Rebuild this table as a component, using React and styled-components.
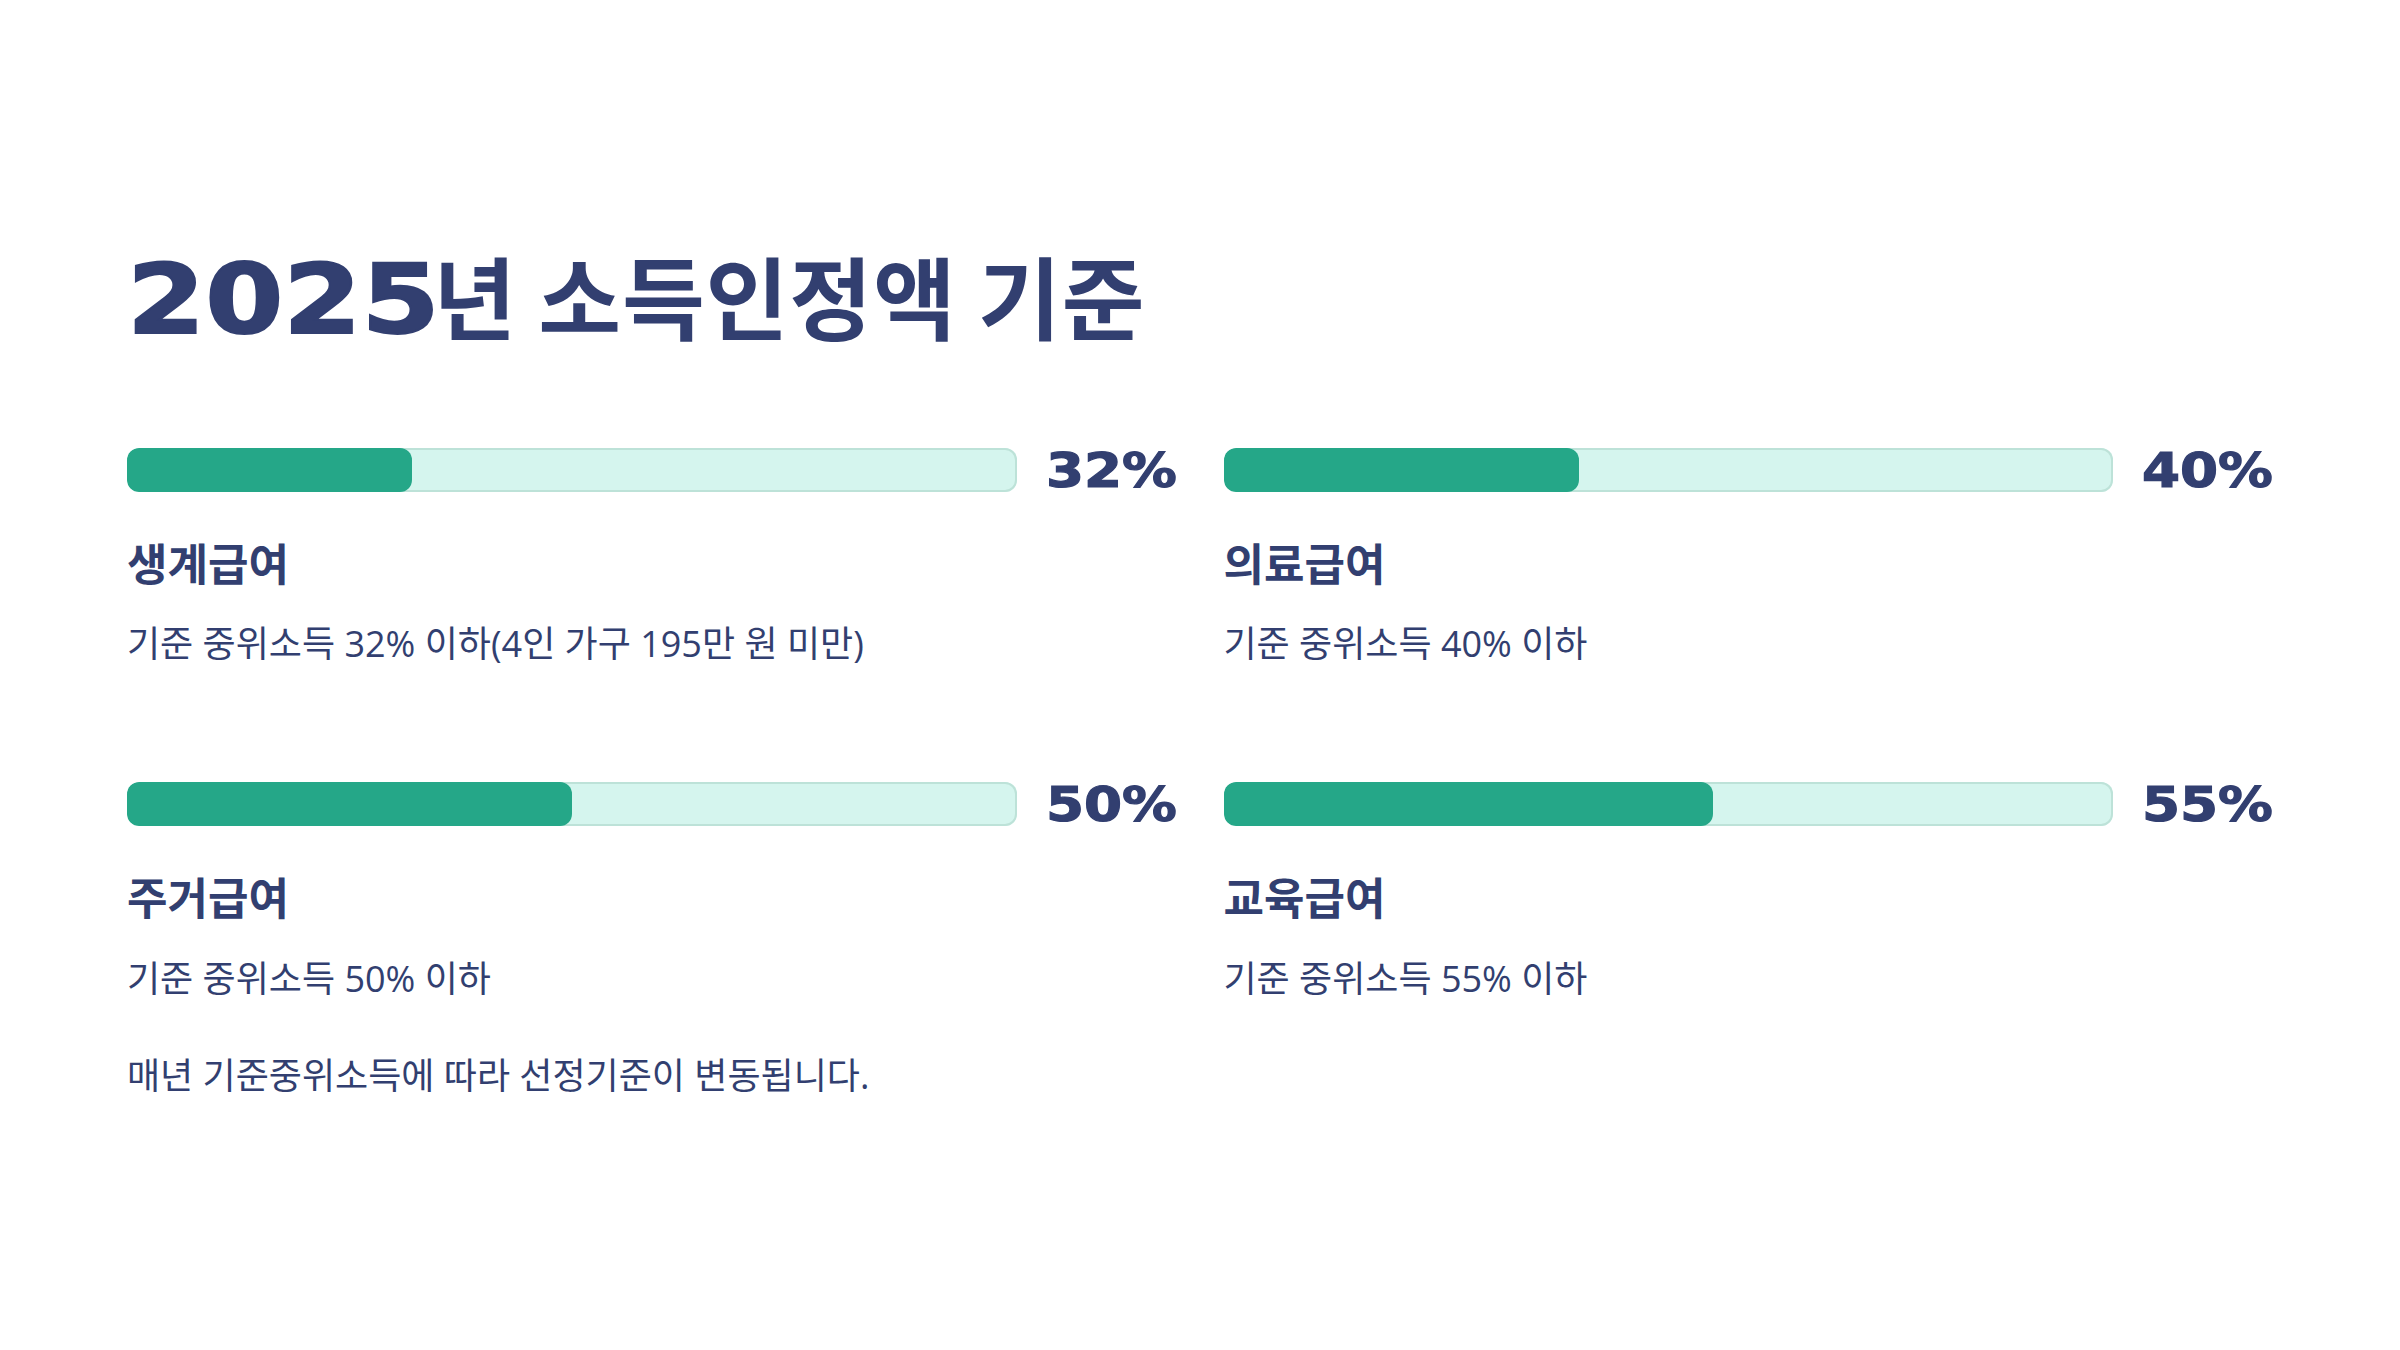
import React from 'react';
import styled, { createGlobalStyle } from 'styled-components';

const NAVY = '#323f70';
const GREEN = '#25a788';
const TRACK = '#d5f5ee';
const TRACK_EDGE = '#bde2d8';

const GlobalStyle = createGlobalStyle`
  html, body {
    margin: 0;
    padding: 0;
    background: #ffffff;
  }
  body {
    font-family: "Open Sans", "Noto Sans CJK KR", sans-serif;
    color: ${NAVY};
  }
`;

const Page = styled.main`
  width: 2400px;
  height: 1350px;
  box-sizing: border-box;
  padding: 240px 127px 0;
  background: #ffffff;
  overflow: hidden;
`;

const Title = styled.h1`
  margin: 0;
  font-family: "Noto Sans CJK KR", sans-serif;
  font-size: 90px;
  font-weight: 700;
  line-height: 1.2;
  letter-spacing: 0.01em;
  color: ${NAVY};
`;

// wide geometric numerals: DejaVu Bold stretched sideways
const Wide = styled.span`
  display: inline-block;
  font-family: "DejaVu Sans", sans-serif;
  font-weight: 700;
  font-size: ${(p) => p.$size}px;
  letter-spacing: 0;
  -webkit-text-stroke: ${(p) => p.$stroke || 0}px ${NAVY};
  transform: scaleX(${(p) => p.$scale});
  transform-origin: ${(p) => p.$origin || 'left'};
  margin-right: ${(p) => p.$extra || 0}px;
`;

const Grid = styled.section`
  display: grid;
  grid-template-columns: 1fr 1fr;
  column-gap: 47px;
  row-gap: 111px;
  margin-top: 90px;
`;

const Item = styled.article`
  display: flex;
  flex-direction: column;
`;

const BarRow = styled.div`
  display: flex;
  align-items: center;
  gap: 45px;
  height: 44px;
`;

const Track = styled.div`
  flex: 1;
  height: 44px;
  border-radius: 12px;
  background: ${TRACK};
  box-shadow: inset 0 0 0 2px ${TRACK_EDGE};
  overflow: hidden;
`;

const Fill = styled.div`
  height: 100%;
  border-radius: 12px;
  background: ${GREEN};
`;

const Percent = styled.div`
  line-height: 1;
  color: ${NAVY};
`;

const Heading = styled.h2`
  margin: 42px 0 0;
  font-family: "Noto Sans CJK KR", sans-serif;
  font-size: 44px;
  font-weight: 700;
  line-height: 1.3;
  color: ${NAVY};
`;

const Desc = styled.p`
  margin: 26px 0 0;
  font-size: 36px;
  font-weight: 400;
  line-height: 1.5;
  color: ${NAVY};
`;

const Note = styled.p`
  margin: 43px 0 0;
  font-size: 36px;
  font-weight: 400;
  line-height: 1.5;
  color: ${NAVY};
`;

const items = [
  { value: 32, name: '생계급여', text: '기준 중위소득 32% 이하(4인 가구 195만 원 미만)' },
  { value: 40, name: '의료급여', text: '기준 중위소득 40% 이하' },
  { value: 50, name: '주거급여', text: '기준 중위소득 50% 이하' },
  { value: 55, name: '교육급여', text: '기준 중위소득 55% 이하' },
];

export default function App() {
  return (
    <>
      <GlobalStyle />
      <Page>
        <Title>
          <Wide $size={96} $scale={1.17} $extra={39} $stroke={2}>2025</Wide>년 소득인정액 기준
        </Title>
        <Grid>
          {items.map((item) => (
            <Item key={item.name}>
              <BarRow>
                <Track>
                  <Fill style={{ width: `${item.value}%` }} />
                </Track>
                <Percent>
                  <Wide $size={48} $scale={1.14} $origin="right" $stroke={1.2}>
                    {item.value}%
                  </Wide>
                </Percent>
              </BarRow>
              <Heading>{item.name}</Heading>
              <Desc>{item.text}</Desc>
            </Item>
          ))}
        </Grid>
        <Note>매년 기준중위소득에 따라 선정기준이 변동됩니다.</Note>
      </Page>
    </>
  );
}
